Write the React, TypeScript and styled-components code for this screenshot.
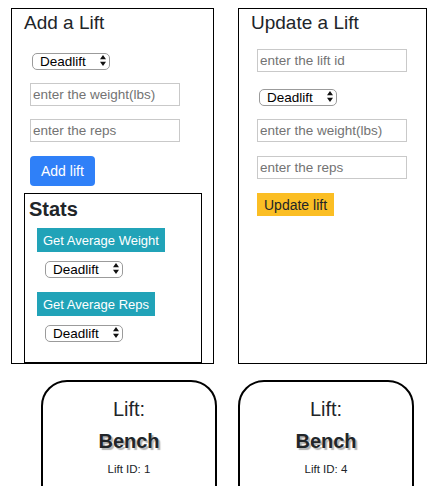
import React from 'react';
import styled, { createGlobalStyle } from 'styled-components';

const GlobalStyle = createGlobalStyle`
    body {
        margin: 0;
        font-family: 'Liberation Sans', Arial, sans-serif;
        color: #212529;
        background: #fff;
    }
`;

const lifts = ['Deadlift', 'Bench', 'Squat', 'Overhead Press'];

const cards = [
    { name: 'Bench', id: 1 },
    { name: 'Bench', id: 4 },
];

const LiftSelect = ({ top, indent }: { top: number; indent: number }) => (
    <SelectWrap $top={top} $indent={indent}>
        <StyledSelect defaultValue="Deadlift">
            {lifts.map((lift) => (
                <option key={lift} value={lift}>
                    {lift}
                </option>
            ))}
        </StyledSelect>
        <Arrows width="6" height="11" viewBox="0 0 6 11">
            <path d="M0 4.2 L3 0 L6 4.2 Z M0 6.8 L3 11 L6 6.8 Z" fill="#111" />
        </Arrows>
    </SelectWrap>
);

export default function App() {
    return (
        <Page>
            <GlobalStyle />
            <PanelRow>
                <Panel $width={203}>
                    <PanelTitle>Add a Lift</PanelTitle>
                    <LiftSelect top={18} indent={8} />
                    <TextInput $top={14} placeholder="enter the weight(lbs)" />
                    <TextInput $top={13} placeholder="enter the reps" />
                    <PrimaryButton>Add lift</PrimaryButton>
                    <StatsBox>
                        <StatsTitle>Stats</StatsTitle>
                        <InfoButton $top={7}>Get Average Weight</InfoButton>
                        <LiftSelect top={8} indent={16} />
                        <InfoButton $top={15}>Get Average Reps</InfoButton>
                        <LiftSelect top={8} indent={16} />
                    </StatsBox>
                </Panel>
                <Panel $width={189}>
                    <PanelTitle>Update a Lift</PanelTitle>
                    <TextInput $top={15} placeholder="enter the lift id" />
                    <LiftSelect top={16} indent={8} />
                    <TextInput $top={14} placeholder="enter the weight(lbs)" />
                    <TextInput $top={14} placeholder="enter the reps" />
                    <WarningButton>Update lift</WarningButton>
                </Panel>
            </PanelRow>
            <CardRow>
                {cards.map((card) => (
                    <LiftCard key={card.id}>
                        <CardLabel>Lift:</CardLabel>
                        <CardName>{card.name}</CardName>
                        <CardId>Lift ID: {card.id}</CardId>
                    </LiftCard>
                ))}
            </CardRow>
        </Page>
    );
}

const Page = styled.div`
    padding-top: 8px;
`;

const PanelRow = styled.div`
    display: flex;
    gap: 24px;
    padding-left: 11px;
`;

const Panel = styled.div<{ $width: number }>`
    box-sizing: border-box;
    width: ${(p) => p.$width}px;
    height: 356px;
    border: 1px solid #000;
    padding: 3px 0 0 12px;
    display: flex;
    flex-direction: column;
    align-items: flex-start;
`;

const PanelTitle = styled.h3`
    margin: 0;
    font-size: 19px;
    line-height: 22px;
    font-weight: 400;
`;

const SelectWrap = styled.div<{ $top: number; $indent: number }>`
    position: relative;
    margin-top: ${(p) => p.$top}px;
    margin-left: ${(p) => p.$indent}px;
    width: 78px;
    height: 17px;
`;

const StyledSelect = styled.select`
    appearance: none;
    box-sizing: border-box;
    width: 100%;
    height: 100%;
    margin: 0;
    padding: 0 0 0 7px;
    border: 1px solid #9b9b9b;
    border-radius: 5px;
    background: #fff;
    font-family: 'Liberation Sans', Arial, sans-serif;
    font-size: 13.5px;
    line-height: 15px;
    color: #000;
`;

const Arrows = styled.svg`
    position: absolute;
    right: 4px;
    top: 3px;
    pointer-events: none;
`;

const TextInput = styled.input<{ $top: number }>`
    box-sizing: border-box;
    width: 150px;
    height: 23px;
    margin: ${(p) => p.$top}px 0 0 6px;
    padding: 0 2px;
    border: 1px solid #c9c9c9;
    border-radius: 0;
    font-family: 'Liberation Sans', Arial, sans-serif;
    font-size: 13.5px;
    color: #212529;

    &::placeholder {
        color: #737373;
    }
`;

const PrimaryButton = styled.button`
    height: 30px;
    margin: 14px 0 0 6px;
    padding: 0 11px;
    border: none;
    border-radius: 4px;
    background: #2f80f8;
    color: #fff;
    font-family: 'Liberation Sans', Arial, sans-serif;
    font-size: 14px;
`;

const WarningButton = styled.button`
    height: 23px;
    margin: 14px 0 0 6px;
    padding: 0 7px;
    border: none;
    border-radius: 0;
    background: #fbbe24;
    color: #212529;
    font-family: 'Liberation Sans', Arial, sans-serif;
    font-size: 14px;
`;

const StatsBox = styled.div`
    box-sizing: border-box;
    width: 178px;
    height: 170px;
    margin-top: 7px;
    border: 1px solid #000;
    padding: 3px 0 0 4px;
    display: flex;
    flex-direction: column;
    align-items: flex-start;
`;

const StatsTitle = styled.h3`
    margin: 0;
    font-size: 20px;
    line-height: 24px;
    font-weight: 700;
`;

const InfoButton = styled.button<{ $top: number }>`
    height: 24px;
    margin: ${(p) => p.$top}px 0 0 8px;
    padding: 0 6px;
    border: none;
    border-radius: 0;
    background: #21a3b8;
    color: #fff;
    font-family: 'Liberation Sans', Arial, sans-serif;
    font-size: 13px;
`;

const CardRow = styled.div`
    display: flex;
    gap: 21px;
    margin-top: 16px;
    padding-left: 41px;
`;

const LiftCard = styled.div`
    box-sizing: border-box;
    width: 176px;
    height: 200px;
    border: 2px solid #000;
    border-radius: 26px;
    padding-top: 15px;
    text-align: center;
`;

const CardLabel = styled.div`
    font-size: 20px;
    line-height: 24px;
`;

const CardName = styled.div`
    margin-top: 8px;
    font-size: 20px;
    line-height: 24px;
    font-weight: 700;
    text-shadow: 2px 2px 1px #b3b3b3;
`;

const CardId = styled.div`
    margin-top: 9px;
    font-size: 11.5px;
    line-height: 14px;
`;
